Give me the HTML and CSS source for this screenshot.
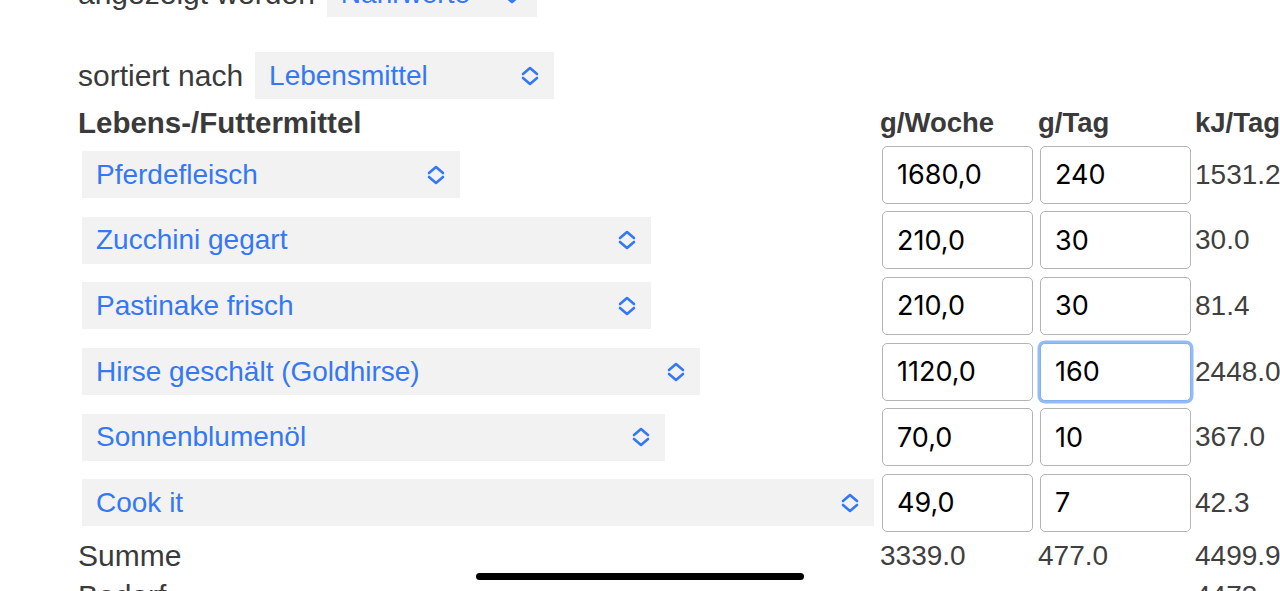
FILE: index.html
```html
<!DOCTYPE html>
<html lang="de">
<head>
<meta charset="utf-8">
<title>Rationsrechner</title>
<link rel="stylesheet" href="styles.css">
</head>
<body>
<div class="page">
  <div class="control-row">
    <span class="label">angezeigt werden</span>
    <div class="select sel-view"><span class="sel-text">Nährwerte</span><svg class="chev" viewBox="0 0 18 20"><path d="M2 8 L9 2 L16 8 M2 12 L9 18 L16 12"/></svg></div>
  </div>
  <div class="control-row sort-row">
    <span class="label">sortiert nach</span>
    <div class="select sel-sort"><span class="sel-text">Lebensmittel</span><svg class="chev" viewBox="0 0 18 20"><path d="M2 8 L9 2 L16 8 M2 12 L9 18 L16 12"/></svg></div>
  </div>

  <div class="food-table">
    <div class="th th-name">Lebens-/Futtermittel</div>
    <div class="th">g/Woche</div>
    <div class="th">g/Tag</div>
    <div class="th">kJ/Tag</div>

    <div class="cell"><div class="select w-pferd"><span class="sel-text">Pferdefleisch</span><svg class="chev" viewBox="0 0 18 20"><path d="M2 8 L9 2 L16 8 M2 12 L9 18 L16 12"/></svg></div></div>
    <div class="cell"><input class="num" type="text" value="1680,0"></div>
    <div class="cell"><input class="num" type="text" value="240"></div>
    <div class="cell val">1531.2</div>

    <div class="cell"><div class="select w-zucc"><span class="sel-text">Zucchini gegart</span><svg class="chev" viewBox="0 0 18 20"><path d="M2 8 L9 2 L16 8 M2 12 L9 18 L16 12"/></svg></div></div>
    <div class="cell"><input class="num" type="text" value="210,0"></div>
    <div class="cell"><input class="num" type="text" value="30"></div>
    <div class="cell val">30.0</div>

    <div class="cell"><div class="select w-past"><span class="sel-text">Pastinake frisch</span><svg class="chev" viewBox="0 0 18 20"><path d="M2 8 L9 2 L16 8 M2 12 L9 18 L16 12"/></svg></div></div>
    <div class="cell"><input class="num" type="text" value="210,0"></div>
    <div class="cell"><input class="num" type="text" value="30"></div>
    <div class="cell val">81.4</div>

    <div class="cell"><div class="select w-hirse"><span class="sel-text">Hirse geschält (Goldhirse)</span><svg class="chev" viewBox="0 0 18 20"><path d="M2 8 L9 2 L16 8 M2 12 L9 18 L16 12"/></svg></div></div>
    <div class="cell"><input class="num" type="text" value="1120,0"></div>
    <div class="cell"><input class="num focused" type="text" value="160"></div>
    <div class="cell val">2448.0</div>

    <div class="cell"><div class="select w-sonne"><span class="sel-text">Sonnenblumenöl</span><svg class="chev" viewBox="0 0 18 20"><path d="M2 8 L9 2 L16 8 M2 12 L9 18 L16 12"/></svg></div></div>
    <div class="cell"><input class="num" type="text" value="70,0"></div>
    <div class="cell"><input class="num" type="text" value="10"></div>
    <div class="cell val">367.0</div>

    <div class="cell"><div class="select w-cook"><span class="sel-text">Cook it</span><svg class="chev" viewBox="0 0 18 20"><path d="M2 8 L9 2 L16 8 M2 12 L9 18 L16 12"/></svg></div></div>
    <div class="cell"><input class="num" type="text" value="49,0"></div>
    <div class="cell"><input class="num" type="text" value="7"></div>
    <div class="cell val">42.3</div>

    <div class="cell label">Summe</div>
    <div class="cell val">3339.0</div>
    <div class="cell val">477.0</div>
    <div class="cell val">4499.9</div>

    <div class="cell label">Bedarf</div>
    <div class="cell val"></div>
    <div class="cell val"></div>
    <div class="cell val">4473</div>
  </div>
</div>
<div class="home-indicator"></div>
</body>
</html>
```

FILE: styles.css
```css
html, body {
  margin: 0;
  padding: 0;
  background: #ffffff;
  overflow: hidden;
}

body {
  width: 1280px;
  height: 591px;
  font-family: "Liberation Sans", Arial, Helvetica, sans-serif;
  color: #3a3a3a;
}

.page {
  margin-top: -30px;
  padding-left: 78px;
}

.control-row {
  display: flex;
  align-items: center;
  gap: 12px;
  height: 47px;
}

.sort-row {
  margin-top: 35px;
}

.label {
  font-size: 30px;
  color: #3a3a3a;
}

.select {
  display: flex;
  align-items: center;
  justify-content: space-between;
  box-sizing: border-box;
  height: 47px;
  padding: 0 15px 0 14px;
  background: #f2f2f2;
  color: #3478f6;
  font-size: 28px;
}

.sel-text {
  white-space: nowrap;
}

.chev {
  width: 18px;
  height: 20px;
  flex: none;
  fill: none;
  stroke: #3478f6;
  stroke-width: 2.6;
  stroke-linecap: round;
  stroke-linejoin: round;
}

.sel-view { width: 210px; padding-right: 16px; }
.sel-sort { width: 299px; }

.food-table {
  display: grid;
  grid-template-columns: 802px 158px 157px 200px;
  grid-template-rows: 43px repeat(6, 65.6px) 40px 40px;
  align-items: center;
}

.th {
  font-weight: bold;
  font-size: 27.5px;
  color: #3a3a3a;
  align-self: start;
  padding-top: 7px;
  line-height: 33px;
  white-space: nowrap;
}

.th-name {
  font-size: 29.5px;
}

.cell {
  display: flex;
  align-items: center;
  white-space: nowrap;
}

.cell .select {
  margin-left: 4px;
}

.w-pferd { width: 378px; }
.w-zucc { width: 569px; }
.w-past { width: 569px; }
.w-hirse { width: 618px; }
.w-sonne { width: 583px; }
.w-cook { width: 792px; }

.num {
  -webkit-appearance: none;
  appearance: none;
  box-sizing: border-box;
  width: 151px;
  height: 58px;
  margin: 0 0 0 2px;
  padding: 0 0 0 14px;
  border: 1px solid #b4b4b4;
  border-radius: 5px;
  background: #ffffff;
  color: #000000;
  font-family: Inter, "Open Sans", sans-serif;
  font-size: 27px;
  outline: none;
}

.num.focused {
  border-color: #84aff3;
  box-shadow: 0 0 0 2.5px #93bbf6;
}

.val {
  font-size: 28px;
  color: #3f3f3f;
}

.home-indicator {
  position: fixed;
  left: 476px;
  bottom: 11px;
  width: 328px;
  height: 7px;
  border-radius: 4px;
  background: #000000;
}
```
